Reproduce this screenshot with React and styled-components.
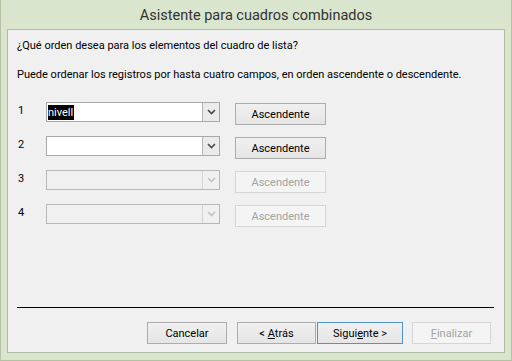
import styled, { createGlobalStyle } from "styled-components"

const GlobalStyle = createGlobalStyle`
  html, body {
    margin: 0;
    padding: 0;
    background: #dae5cd;
  }
  * { box-sizing: border-box; }
`

const Window = styled.div`
  width: 512px;
  height: 361px;
  display: flex;
  flex-direction: column;
  background: #dae5cd;
  border: 1px solid #b3c2a3;
  border-top: none;
  font-family: Roboto, "Open Sans", sans-serif;
  color: #000;
`

const TitleBar = styled.div`
  height: 29px;
  display: flex;
  align-items: center;
  justify-content: center;
  font-size: 14.5px;
  color: #333;
  padding-top: 2px;
`

const Client = styled.div`
  flex: 1;
  margin: 0 6px 7px 6px;
  border: 1px solid #b1bea4;
  background: #f0f0f0;
  display: flex;
  flex-direction: column;
  padding: 8px 9px 8px 9px;
  font-size: 11px;
`

const Text = styled.div`
  line-height: 16px;
  white-space: nowrap;
  margin-bottom: ${p => p.gap || 0}px;
`

const Rows = styled.div`
  display: flex;
  flex-direction: column;
  gap: 14px;
`

const Row = styled.div`
  display: flex;
  align-items: flex-start;
  height: 20px;
`

const Num = styled.div`
  width: 29px;
  padding: 1px 0 0 1px;
  line-height: 16px;
`

const Combo = styled.div`
  width: 174px;
  height: 20px;
  display: flex;
  border: 1px solid ${p => (p.disabled ? "#b8b8b8" : "#a8a8a8")};
  background: ${p => (p.disabled ? "#f0f0f0" : "#fff")};
`

const ComboText = styled.div`
  flex: 1;
  display: flex;
  align-items: center;
  padding-left: 1px;
`

const Selected = styled.span`
  background: #000;
  color: #fff;
  line-height: 15px;
  padding-right: 1px;
`

const DropButton = styled.div`
  width: 17px;
  display: flex;
  align-items: center;
  justify-content: center;
  border-left: 1px solid ${p => (p.disabled ? "#d4d4d4" : "#b5b5b5")};
  background: ${p => (p.disabled ? "#f0f0f0" : "#ebebeb")};
`

const Button = styled.div`
  width: ${p => p.w || 91}px;
  height: 22px;
  display: flex;
  align-items: center;
  justify-content: center;
  white-space: pre;
  margin-top: ${p => p.mt || 0}px;
  margin-left: ${p => p.ml || 0}px;
  border: 1px solid ${p => (p.disabled ? "#d5d5d5" : p.primary ? "#4f93cf" : "#acacac")};
  background: ${p =>
    p.disabled ? "#f4f4f4" : "linear-gradient(#f0f0f0, #e5e5e5)"};
  color: ${p => (p.disabled ? "#a3a3a3" : "#000")};
  font-size: 11px;
  u { text-decoration: underline; }
`

const Spacer = styled.div`
  flex: 1;
`

const Separator = styled.div`
  height: 1px;
  background: #000;
  margin: 0 1px 14px 0;
`

const Footer = styled.div`
  display: flex;
  justify-content: flex-end;
  padding-right: 4px;
`

const Chevron = ({ disabled }) => (
  <svg width="9" height="6" viewBox="0 0 9 6">
    <path
      d="M1 1 L4.5 4.5 L8 1"
      fill="none"
      stroke={disabled ? "#c4c4c4" : "#4a4a4a"}
      strokeWidth="1.6"
    />
  </svg>
)

const rows = [
  { n: 1, value: "nivell", disabled: false },
  { n: 2, value: "", disabled: false },
  { n: 3, value: "", disabled: true },
  { n: 4, value: "", disabled: true },
]

const App = () => {
  return (
    <>
      <GlobalStyle />
      <Window>
        <TitleBar>Asistente para cuadros combinados</TitleBar>
        <Client>
          <Text gap={13}>¿Qué orden desea para los elementos del cuadro de lista?</Text>
          <Text gap={19}>
            Puede ordenar los registros por hasta cuatro campos, en orden ascendente o descendente.
          </Text>
          <Rows>
            {rows.map(r => (
              <Row key={r.n}>
                <Num>{r.n}</Num>
                <Combo disabled={r.disabled}>
                  <ComboText>{r.value && <Selected>{r.value}</Selected>}</ComboText>
                  <DropButton disabled={r.disabled}>
                    <Chevron disabled={r.disabled} />
                  </DropButton>
                </Combo>
                <Button mt={1} ml={15} disabled={r.disabled}>
                  Ascendente
                </Button>
              </Row>
            ))}
          </Rows>
          <Spacer />
          <Separator />
          <Footer>
            <Button w={80}>Cancelar</Button>
            <Button w={79} ml={10}>
              {"< "}<u>A</u>trás
            </Button>
            <Button w={86} ml={1} primary>
              Sigui<u>e</u>nte &gt;
            </Button>
            <Button w={79} ml={9} disabled>
              <u>F</u>inalizar
            </Button>
          </Footer>
        </Client>
      </Window>
    </>
  )
}

export default App
